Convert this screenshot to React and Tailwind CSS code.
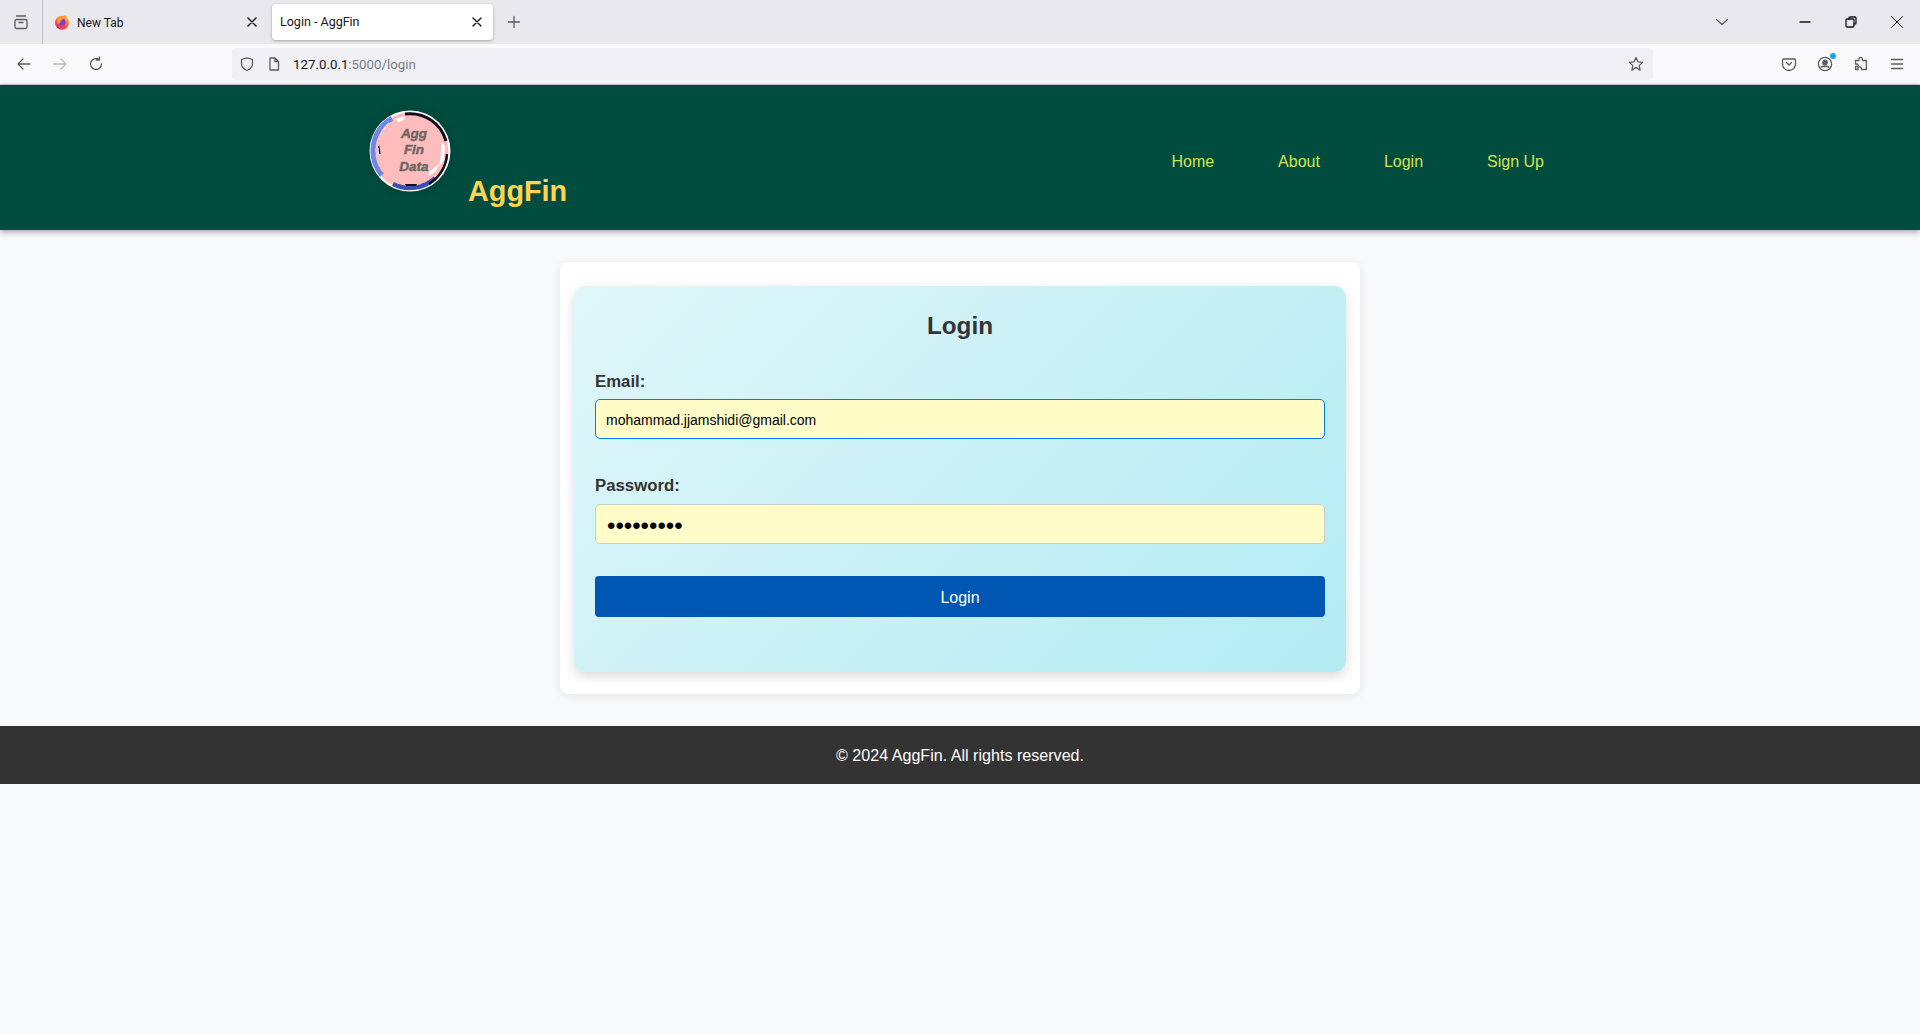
import React from "react";

const Icon = ({ className = "", size = 16, children, vb = "0 0 16 16", sw = "1.3" }) => (
  <svg
    width={size}
    height={size}
    viewBox={vb}
    fill="none"
    stroke="currentColor"
    strokeWidth={sw}
    strokeLinecap="round"
    strokeLinejoin="round"
    className={className}
  >
    {children}
  </svg>
);

const CloseIcon = () => (
  <Icon size={12} vb="0 0 12 12" sw="1.4" className="text-[#15141a]">
    <path d="M2 2l8 8M10 2l-8 8" />
  </Icon>
);

const FirefoxLogo = () => (
  <svg width="16" height="16" viewBox="0 0 16 16">
    <defs>
      <linearGradient id="ff" x1="0.8" y1="0.1" x2="0.2" y2="0.9">
        <stop offset="0" stopColor="#ffb02e" />
        <stop offset="0.5" stopColor="#ff5a3c" />
        <stop offset="1" stopColor="#e0287a" />
      </linearGradient>
    </defs>
    <circle cx="8" cy="8.7" r="7" fill="url(#ff)" />
    <path d="M11 0.6c1.5 1.6 2.9 3.6 2.9 5.8L9 4.5z" fill="#ffa436" />
    <circle cx="8.2" cy="8.2" r="3.4" fill="#7b3fd6" />
    <path d="M3.2 4.2c2.2 -1.5 4.9 -1 5.9 0.9L7 6.5 5.6 9.6 2.8 9z" fill="#ff9a2e" />
  </svg>
);

// round logo, drawn since there is no image file
const Logo = () => (
  <div className="w-[82px] h-[82px] shrink-0 rounded-full shadow-[0_0_8px_6px_rgba(0,0,0,0.08)]">
    <svg width="82" height="82" viewBox="0 0 82 82" fill="none">
      <circle cx="41" cy="41" r="40.5" fill="#fff" />
      <circle cx="41" cy="41" r="38.5" fill="#ffbcbc" />
      <path d="M23 8.5A37 37 0 0 0 13 65" stroke="#6e86e6" strokeWidth="5" />
      <path d="M20 13A33 33 0 0 0 10 46" stroke="#dfe5ff" strokeWidth="1.5" />
      <path d="M9 32L11 44" stroke="#111" strokeWidth="1.5" />
      <path d="M24 74A37 37 0 0 0 66 68" stroke="#3a4fb0" strokeWidth="4.5" />
      <path d="M36 4A37.5 37.5 0 0 1 77 31" stroke="#0c0c1c" strokeWidth="3" />
      <path d="M78 44A37.5 37.5 0 0 1 60 74" stroke="#0c0c1c" strokeWidth="2.5" />
      <circle cx="41" cy="41" r="33" stroke="#ffbcbc" strokeWidth="3.5" strokeDasharray="4 2 7 1.5 3 3" />
      <path d="M36 74L48 74 47 76 37 76z" fill="#111" />
      <path d="M72 32L76 36 75 50 70 57 72 44z" fill="#fff" />
      <path d="M26 9L36 6 35 10 29 12z" fill="#fff" />
      <path d="M60 62L70 54 67 61 60 66z" fill="#fff" />
      <g
        fontFamily='"Liberation Sans", Arial, sans-serif'
        fontSize="13.5"
        fontWeight="700"
        fontStyle="italic"
        fill="#6b6464"
        stroke="#6b6464"
        strokeWidth="0.4"
        textAnchor="middle"
      >
        <text x="45" y="28">Agg</text>
        <text x="45" y="44">Fin</text>
        <text x="45" y="61">Data</text>
      </g>
    </svg>
  </div>
);

const BrowserChrome = () => (
  <div className="text-[#15141a] font-['Roboto',sans-serif]">
    <div className="h-[44px] bg-[#e9e9ed] flex items-center">
      <div className="w-[43px] h-full flex items-center justify-center border-r border-[#c4c4c8] text-[#5b5b66]">
        <Icon size={16}>
          <rect x="2" y="5.5" width="12" height="9" rx="1.5" />
          <path d="M3.5 2h9M6 8.5h4" />
        </Icon>
      </div>
      <div className="w-[229px] h-[36px] flex items-center pl-[11px] pr-[14px] text-[12px]">
        <FirefoxLogo />
        <span className="ml-[7px] flex-1 pt-[1px]">New Tab</span>
        <CloseIcon />
      </div>
      <div className="w-[221px] h-[36px] bg-white rounded-[4px] shadow-[0_1px_3px_rgba(0,0,0,0.3)] flex items-center justify-between pl-[8px] pr-[10px] text-[12.5px]">
        <span className="pt-[1px]">Login - AggFin</span>
        <CloseIcon />
      </div>
      <div className="ml-[13px] text-[#5b5b66]">
        <Icon size={16}>
          <path d="M8 2.5v11M2.5 8h11" />
        </Icon>
      </div>
      <div className="flex-1" />
      <div className="mr-[67px] text-[#5b5b66]">
        <Icon size={16}>
          <path d="M2.5 5.5L8 10.5l5.5-5" />
        </Icon>
      </div>
      <div className="flex items-center gap-[30px] pr-[15px] text-[#15141a]">
        <Icon size={16}>
          <path d="M3 8h10" />
        </Icon>
        <Icon size={16}>
          <rect x="3" y="5" width="8" height="8" rx="1" />
          <path d="M6 5V4a1 1 0 0 1 1-1h5a1 1 0 0 1 1 1v5a1 1 0 0 1-1 1h-1" />
        </Icon>
        <Icon size={16}>
          <path d="M2.5 2.5l11 11M13.5 2.5l-11 11" strokeWidth="1" />
        </Icon>
      </div>
    </div>
    <div className="h-[41px] bg-[#f9f9fb] border-b border-[#cfcfd8] flex items-center">
      <div className="w-[232px] pl-[16px] flex items-center gap-[20px] text-[#5b5b66]">
        <Icon size={16}>
          <path d="M14 8H2.5M7 3L2 8l5 5" />
        </Icon>
        <Icon size={16} className="text-[#b7b7bd]">
          <path d="M2 8h11.5M9 3l5 5-5 5" />
        </Icon>
        <Icon size={16}>
          <path d="M13.5 8A5.5 5.5 0 1 1 11 3.4M11.5 1v3h-3" />
        </Icon>
      </div>
      <div className="w-[1421px] h-[32px] bg-[#f0f0f4] rounded-[4px] flex items-center pl-[7px] pr-[9px] text-[#5b5b66]">
        <Icon size={16}>
          <path d="M8 1.8l5.5 1.7v4c0 3.5-2.2 5.8-5.5 7-3.3-1.2-5.5-3.5-5.5-7v-4z" />
        </Icon>
        <Icon size={16} className="ml-[11px]">
          <path d="M4 2h5l3.5 3.5V14H4zM9 2v3.5h3.5" />
        </Icon>
        <span className="ml-[11px] text-[13.3px] flex-1 pt-[1px]">
          <span className="text-[#15141a]">127.0.0.1</span>
          <span className="text-[#7c7c85]">:5000/login</span>
        </span>
        <Icon size={16}>
          <path d="M8 1.6l2 4.2 4.6.6-3.4 3.2.9 4.6L8 11.4l-4.1 2.8.9-4.6L1.4 6.4 6 5.8z" />
        </Icon>
      </div>
      <div className="flex-1" />
      <div className="flex items-center gap-[20px] pr-[15px] text-[#5b5b66]">
        <Icon size={16}>
          <path d="M2.5 3h11a1 1 0 0 1 1 1v4a6.5 6.5 0 0 1-13 0V4a1 1 0 0 1 1-1z" />
          <path d="M5.5 6.5L8 9l2.5-2.5" />
        </Icon>
        <div className="relative">
          <Icon size={16}>
            <circle cx="8" cy="8" r="6.6" />
            <circle cx="8" cy="6.4" r="2.2" fill="currentColor" />
            <path d="M4 11.2c1-1.5 7-1.5 8 0" fill="currentColor" />
          </Icon>
          <span className="absolute top-[-3px] right-[-3px] w-[6px] h-[6px] rounded-full bg-[#0ea5f0]" />
        </div>
        <Icon size={16}>
          <path d="M2.5 8V4.5H6V3a1.7 1.7 0 0 1 3.4 0v1.5h4v9h-5v-1a1.7 1.7 0 0 0-3.4 0v1h-2.5v-3H4a1.2 1.2 0 0 0 0-2.5z" />
        </Icon>
        <Icon size={16}>
          <path d="M2.5 3.5h11M2.5 8h11M2.5 12.5h11" />
        </Icon>
      </div>
    </div>
  </div>
);

const App = () => {
  return (
    <div className="min-h-screen bg-[#f8f9fa] font-['Liberation_Sans',Arial,sans-serif] text-[#333]">
      <BrowserChrome />

      <header className="h-[145px] bg-[#004d40] shadow-[0_2px_6px_rgba(0,0,0,0.35)] flex justify-between pl-[369px] pr-[376px]">
        <div className="flex pt-[25px]">
          <Logo />
          <span className="ml-[17px] mt-[64px] text-[28.8px] leading-[34px] font-bold text-[#ffd54f]">AggFin</span>
        </div>
        <nav className="flex items-center gap-[64px] pt-[8px] text-[16px] text-[#d4e157]">
          <a>Home</a>
          <a>About</a>
          <a>Login</a>
          <a>Sign Up</a>
        </nav>
      </header>

      <main className="flex justify-center pt-[32px] pb-[32px]">
        <div className="w-[800px] h-[432px] bg-white rounded-[8px] shadow-[0_2px_10px_rgba(0,0,0,0.08)] px-[14px] pt-[24px]">
          <form className="h-[386px] rounded-[12px] bg-[linear-gradient(135deg,#e0f7fa,#b2ebf2)] shadow-[0_4px_12px_rgba(0,0,0,0.15)] px-[21px] pt-[25px]">
            <h2 className="text-center text-[24.3px] leading-[29px] font-bold">Login</h2>
            <label className="block mt-[33px] text-[16.8px] leading-[18px] font-bold">Email:</label>
            <input
              readOnly
              value="mohammad.jjamshidi@gmail.com"
              className="block w-full h-[40px] mt-[8px] pl-[10px] pr-[11px] pt-[1px] text-[14px] text-black bg-[#fffcc8] border border-[#007bff] rounded-[5px] outline-none"
            />
            <label className="block mt-[38px] text-[16.8px] leading-[18px] font-bold">Password:</label>
            <input
              readOnly
              type="password"
              value="123456789"
              className="block w-full h-[40px] mt-[9px] px-[11px] pt-[3px] text-[24px] text-black bg-[#fffcc8] border border-[#ccc] rounded-[5px] outline-none"
            />
            <button
              type="button"
              className="block w-full h-[41px] mt-[32px] pt-[3px] bg-[#0056b3] text-white text-[16px] rounded-[4px]"
            >
              Login
            </button>
          </form>
        </div>
      </main>

      <footer className="h-[58px] pt-[1px] bg-[#333] text-white text-[16.1px] flex items-center justify-center">
        © 2024 AggFin. All rights reserved.
      </footer>
    </div>
  );
};

export default App;
